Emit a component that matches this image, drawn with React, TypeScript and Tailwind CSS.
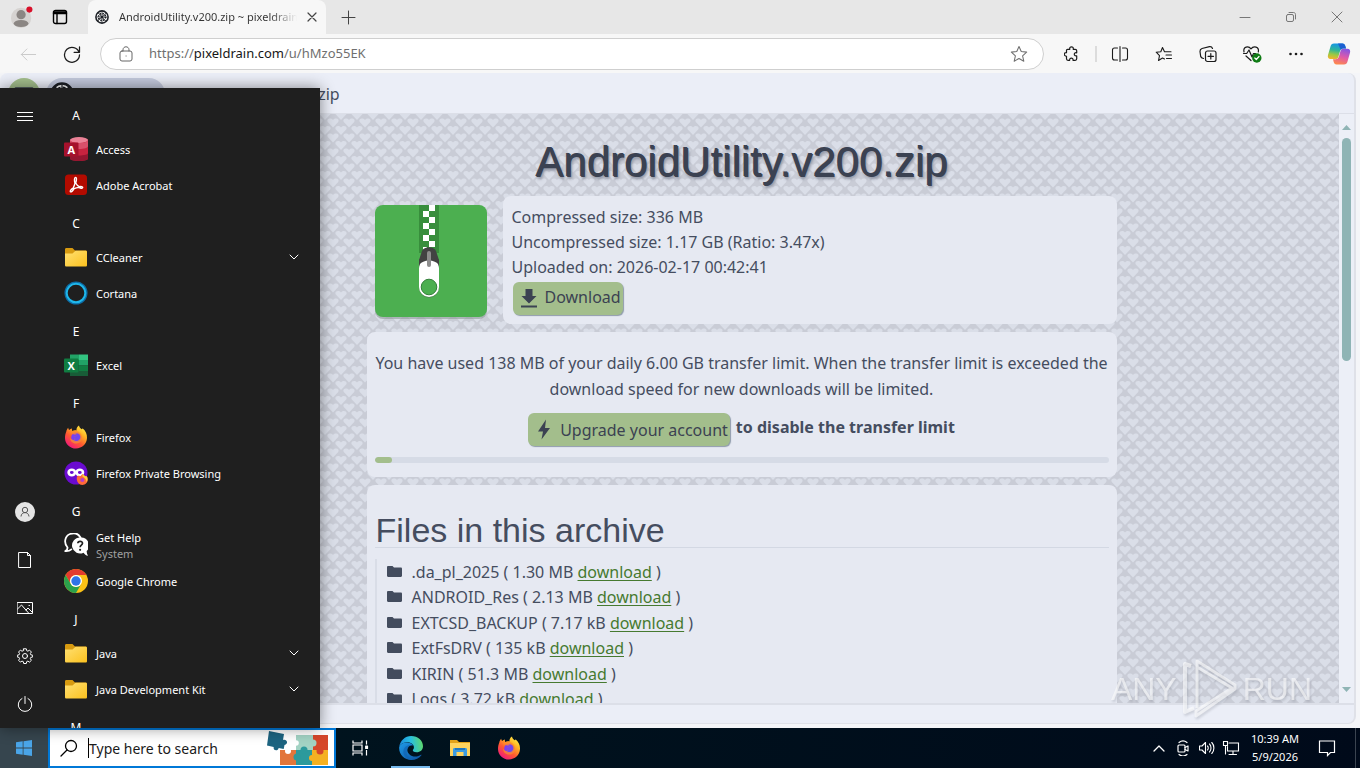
import { useId } from 'react';
import type { ReactNode } from 'react';

type IconProps = { className?: string };

function Line({ size = 20, w = 1, box = 24, className = '', children }: { size?: number; w?: number; box?: number; className?: string; children: ReactNode }) {
  return (
    <svg width={size} height={size} viewBox={`0 0 ${box} ${box}`} fill="none" stroke="currentColor" strokeWidth={w} strokeLinecap="round" strokeLinejoin="round" className={className} aria-hidden="true">
      {children}
    </svg>
  );
}

/* ---------- logos ---------- */

function WheelLogo({ size }: { size: number }) {
  return (
    <svg width={size} height={size} viewBox="0 0 24 24" aria-hidden="true">
      <circle cx="12" cy="12" r="10.5" fill="#fff" stroke="#1b1e24" strokeWidth="2.6" />
      <circle cx="12" cy="12" r="6" fill="none" stroke="#1b1e24" strokeWidth="3" strokeDasharray="2.6 2.1" />
      <circle cx="12" cy="12" r="2.6" fill="#1b1e24" />
      <path d="M12 2v20M2 12h20M5 5l14 14M19 5 5 19" stroke="#1b1e24" strokeWidth="1.2" />
    </svg>
  );
}

function AccessLogo() {
  return (
    <svg width="24" height="24" viewBox="0 0 24 24" aria-hidden="true">
      <path d="M6 2.5v19C6 23 10 24 15 24s9-1 9-2.5v-19Z" fill="#c8233f" />
      <path d="M6 16v5.5C6 23 10 24 15 24s9-1 9-2.5V16c0 1.500-4 2.500-9 2.500S6 17.500 6 16Z" fill="#951630" />
      <ellipse cx="15" cy="3" rx="9" ry="3" fill="#ea8296" />
      <path d="M6 3c0 2 4 3 9 3s9-1 9-3v6c0 2-4 3-9 3s-9-1-9-3Z" fill="#d9506a" />
      <rect y="5.500" width="14.500" height="14" rx="1" fill="#a5122c" />
      <text x="7.200" y="16.500" textAnchor="middle" fontSize="11" fontWeight="700" fill="#fff" fontFamily="Open Sans, sans-serif">A</text>
    </svg>
  );
}

function ExcelLogo() {
  return (
    <svg width="24" height="24" viewBox="0 0 24 24" aria-hidden="true">
      <path d="M6 1.500h9V7H6Z" fill="#21a366" />
      <path d="M15 1.500h9V7h-9Z" fill="#33c481" />
      <path d="M6 7h9v5.500H6Z" fill="#107c41" />
      <path d="M15 7h9v5.500h-9Z" fill="#21a366" />
      <path d="M6 12.500h9V18H6Z" fill="#185c37" />
      <path d="M15 12.500h9V18h-9Z" fill="#107c41" />
      <path d="M6 18h18v5H6Z" fill="#185c37" />
      <rect y="5.500" width="14.500" height="14" rx="1" fill="#107c41" />
      <text x="7.200" y="16.500" textAnchor="middle" fontSize="11" fontWeight="700" fill="#fff" fontFamily="Open Sans, sans-serif">X</text>
    </svg>
  );
}

function AcrobatLogo() {
  return (
    <svg width="24" height="24" viewBox="0 0 24 24" aria-hidden="true">
      <rect x="1" y="1.500" width="22" height="20.500" rx="3.500" fill="#b30b00" />
      <path d="M11.500 5.200c1.500 0 .9 3.600.2 5.600 1.100 2.100 2.300 3 3.500 3.600 2.100-.3 3.700.1 3.500 1.100-.2.900-2 .7-3.800-.3-1.700.2-3.300.6-4.800 1.200-1.500 2.500-3 3.800-3.700 3.100-.7-.8.6-2.200 2.700-3.500.8-1.600 1.500-3.300 1.900-5-.7-2.200-.9-5.800.5-5.800Z" fill="none" stroke="#fff" strokeWidth="1.400" transform="translate(0 -.8)" />
    </svg>
  );
}

function FolderLogo() {
  const id = useId();
  return (
    <svg width="24" height="24" viewBox="0 0 24 24" aria-hidden="true">
      <linearGradient id={id} x1="0" y1="0" x2="1" y2="1">
        <stop offset="0" stopColor="#ffe073" />
        <stop offset="1" stopColor="#fbc11e" />
      </linearGradient>
      <path d="M1 4.500C1 3.500 1.500 3 2.500 3h6l2.500 2.500h10.500c1 0 1.500.5 1.500 1.500v6H1Z" fill="#d79a10" />
      <path d="M1 8.500h7.500L11.500 5.700h10c1 0 1.500.5 1.500 1.500V20c0 1-.5 1.500-1.500 1.500h-19C1.500 21.500 1 21 1 20Z" fill={`url(#${id})`} />
    </svg>
  );
}

function CortanaLogo() {
  return (
    <svg width="24" height="24" viewBox="0 0 24 24" aria-hidden="true">
      <circle cx="12" cy="12" r="10.300" fill="none" stroke="#0d6ea8" strokeWidth="2.500" />
      <circle cx="12" cy="12" r="9.300" fill="none" stroke="#1fb7ea" strokeWidth="2" />
    </svg>
  );
}

function FirefoxLogo({ size = 24 }: { size?: number }) {
  const id = useId();
  return (
    <svg width={size} height={size} viewBox="0 0 24 24" aria-hidden="true">
      <linearGradient id={id} x1=".85" y1=".05" x2=".2" y2=".95">
        <stop offset="0" stopColor="#fff04a" />
        <stop offset=".3" stopColor="#ffb224" />
        <stop offset=".62" stopColor="#ff5a30" />
        <stop offset="1" stopColor="#f0187c" />
      </linearGradient>
      <path d="M2.300 6.500C2.600 5 3.300 3.700 4.200 2.800c.1 1 .4 1.700.9 2.300C6 4.200 7 3.700 8 3.500c-.2 1-.1 1.700.3 2.400 1.600-.6 3-.8 4.200-.4C12.300 3.500 13 1.600 15 .5c.3 1.800 1.400 2.800 2.700 3.800.6-.1.800-.5.800-1 3.200 2.600 4.700 6 4.500 9.800-.3 6-5 10.400-11 10.400S1 18.900 1 12.900c0-2.400.5-4.500 1.300-6.400Z" fill={`url(#${id})`} />
      <circle cx="12.200" cy="12.600" r="5" fill="#7a3ff2" />
      <path d="M12.500 5.800c-3-.7-5.500.4-6.600 2.600 1.600-.4 3 .1 3.800 1 1.200 0 2.800.1 2.900.8-.1 1-2.300 1.200-2.600 1.900-.4.900 0 1.800 1.500 2.500-2.300 1-4.700 0-5.500-2 .1 4 3 6.200 6.300 6 4-.2 6.200-3.500 5.600-6.800-.4-3.200-2.500-4.500-5.400-6Z" fill="#ff8a2b" opacity=".8" />
      <path d="M10 12.100c.3-.7 2.500-.9 2.600-1.900-.1-.5-.8-.7-1.600-.8 1.300-1.300 3.500-1 4.700.7 1.300 2.300.3 5.200-2.400 5.900-1.500.3-3-.3-3.700-1.200.7.200 1.300.1 1.900-.2-1.500-.7-1.900-1.600-1.500-2.500Z" fill="#7346ee" />
    </svg>
  );
}

function PrivateLogo() {
  return (
    <svg width="24" height="24" viewBox="0 0 24 24" aria-hidden="true">
      <circle cx="12" cy="12" r="11.500" fill="#6a0bd0" />
      <ellipse cx="7.800" cy="11.500" rx="3.200" ry="2.700" fill="none" stroke="#fff" strokeWidth="2.600" />
      <ellipse cx="15.800" cy="11.500" rx="3.200" ry="2.700" fill="none" stroke="#fff" strokeWidth="2.600" />
      <path d="M13 15.500l2-1 1 1 2.500-2.500 2.500 2 2 .5c2 4.500-.5 8.500-4.700 8.500-4 0-6.300-4-5.300-8.500Z" fill="#ff6a3a" />
      <path d="M18.500 13l2.500 2 2 .5c.8 2 .8 4-.3 5.500-.5-3-2-4-4.200-5.500Z" fill="#ffcf3a" />
      <circle cx="18.300" cy="19" r="2" fill="#b43fc8" />
    </svg>
  );
}

function HelpLogo() {
  return (
    <svg width="24" height="24" viewBox="0 0 24 24" aria-hidden="true">
      <path d="M3.500 14.500C-.5 10 .8 3 6 1c4.500-1.700 8.500 0 10.500 3.500M3.500 14.500c.1 1.500-.7 3-2.200 3.600 2.500.2 4.700-.5 6-1.700" fill="none" stroke="#fff" strokeWidth="1.800" strokeLinecap="round" strokeLinejoin="round" />
      <path d="M16 4.500a8 8 0 1 0 3.500 15.200c1 1.600 2.500 2.700 4.500 3-.9-1.500-1.400-3-1.300-4.600A8 8 0 0 0 16 4.500Z" fill="#fff" />
      <path d="M13.800 10.300c.2-2.600 4.800-2.600 4.700 0-.1 1.900-2.400 1.800-2.400 4" fill="none" stroke="#1f1f1f" strokeWidth="1.700" />
      <circle cx="16.100" cy="16.800" r="1.100" fill="#1f1f1f" />
    </svg>
  );
}

function ChromeLogo() {
  return (
    <svg width="24" height="24" viewBox="0 0 24 24" aria-hidden="true">
      <circle cx="12" cy="12" r="12" fill="#fbc116" />
      <path d="M1.608 6A12 12 0 0 1 22.392 6H12a6 6 0 0 0-5.196 9Z" fill="#e33b2e" />
      <path d="M1.608 6A12 12 0 0 0 12 24l5.196-9a6 6 0 0 1-10.392 0Z" fill="#2ba24c" />
      <circle cx="12" cy="12" r="6" fill="#fff" />
      <circle cx="12" cy="12" r="4.700" fill="#2f74e8" />
    </svg>
  );
}

function EdgeLogo() {
  return (
    <svg width="24" height="24" viewBox="0 0 24 24" aria-hidden="true">
      <defs>
        <linearGradient id="edge-top" x1="0" y1=".5" x2="1" y2=".4">
          <stop offset="0" stopColor="#1b8be0" />
          <stop offset=".5" stopColor="#28bfe0" />
          <stop offset="1" stopColor="#5fd96a" />
        </linearGradient>
        <linearGradient id="edge-low" x1="0" y1="0" x2="1" y2="1">
          <stop offset="0" stopColor="#1f9be8" />
          <stop offset="1" stopColor="#0b4f9e" />
        </linearGradient>
      </defs>
      <path d="M.2 11C1 4.800 6 0 12.200 0 19 0 24 4.700 24 10.300c0 3.700-2.800 6-6.400 6-2.900 0-4.200-1-3.700-2.200.6-.9 1.100-1.500 1-3C14.700 8 11 6 7.500 6.300 4 6.600 1.200 8.300.2 11Z" fill="url(#edge-top)" />
      <path d="M.2 11C1.300 7.800 4.500 6.200 8 6.400c3.300.2 5.500 1.600 6.400 3.200-2-.8-4.500.1-5.600 2.300-1.900 4.300 2.300 8.800 7.500 8.700 2.400 0 4-.7 5.600-1.800.5-.2.700.1.500.5C20.300 22.300 16.500 24 12.500 24 5 24-.5 18 .2 11Z" fill="url(#edge-low)" />
      <path d="M8.800 11.900c-3 5.400.5 10.800 6.200 11.800-8 1-12.500-6-10-11 1.500-3 5.500-4.500 9.400-3.100-2-.8-4.500.1-5.600 2.300Z" fill="#0f62b4" opacity=".65" />
    </svg>
  );
}

function ExplorerLogo() {
  return (
    <svg width="22" height="22" viewBox="0 0 22 22" aria-hidden="true">
      <path d="M1 3h7l2 2h11v5H1Z" fill="#e3a21a" />
      <path d="M1 6h20v13H1Z" fill="#ffd35e" />
      <path d="M4 19v-6.500c0-1 .6-1.500 1.500-1.500h11c.9 0 1.500.5 1.500 1.500V19h-3.500v-4h-7v4Z" fill="#3c9be0" />
      <path d="M6 11h10v2H6Z" fill="#1f75bd" />
    </svg>
  );
}

function CopilotLogo() {
  return (
    <svg width="24" height="24" viewBox="0 0 24 24" aria-hidden="true">
      <defs>
        <linearGradient id="cop-l" x1=".4" y1="0" x2=".2" y2="1">
          <stop offset="0" stopColor="#1595e6" />
          <stop offset=".4" stopColor="#2db59a" />
          <stop offset=".7" stopColor="#9bc943" />
          <stop offset="1" stopColor="#f7b32b" />
        </linearGradient>
        <linearGradient id="cop-r" x1=".6" y1="0" x2=".3" y2="1">
          <stop offset="0" stopColor="#8a55e0" />
          <stop offset=".5" stopColor="#e05aa8" />
          <stop offset="1" stopColor="#ff8a4a" />
        </linearGradient>
      </defs>
      <path d="M7 1.500h8.500c1.600 0 2.300 1 2.800 2.500L19 6.500h-2.500c-2 0-3 1-3.600 3l-1.500 5.200c-.5 1.600-1.300 2.300-3 2.300H3.500C1.200 17 .4 15.200 1 13L3.500 4.500C4 2.700 5 1.500 7 1.500Z" fill="url(#cop-l)" />
      <path d="M11 1.500h4.500c1.600 0 2.300 1 2.800 2.500L19 6.500h-2.500c-1.300 0-2.200.4-2.800 1.300Z" fill="#1c5fd0" />
      <path d="M17 22.500H9.500c-1.700 0-2.300-1-2.800-2.500L6 17.200h2.400c2 0 3-1 3.600-3L13.500 9c.5-1.600 1.300-2.300 3-2.300h4c2.300 0 3.100 1.800 2.500 4l-2.500 8.800c-.5 1.800-1.500 3-3.500 3Z" fill="url(#cop-r)" />
    </svg>
  );
}

function ZipArt() {
  return (
    <svg width="112" height="114" viewBox="0 0 112 114" className="mt-[9px]" aria-hidden="true">
      <rect y="2" width="112" height="112" rx="8" fill="#8f9a9a" opacity=".6" />
      <rect width="112" height="112" rx="8" fill="#4caf50" />
      <rect x="44" width="20" height="48" fill="#388e3c" />
      {[0, 1, 2, 3, 4, 5, 6].map((i) => (
        <rect key={i} x={i % 2 ? 48 : 54} y={i * 6} width="6" height="6" fill="#fff" />
      ))}
      <rect x="48" y="42" width="4" height="3" fill="#fff" />
      <path d="M47 46c2-5 12-5 14 0l3 9v6H44v-6Z" fill="#424242" />
      <rect x="44" y="55" width="20" height="38" rx="10" fill="#5a6a5a" opacity=".5" />
      <rect x="44" y="53" width="20" height="39" rx="10" fill="#fff" />
      <path d="M44 60v-5c4-3 16-3 20 0v5c-4-6-16-6-20 0Z" fill="#424242" />
      <rect x="52" y="46" width="4" height="16" rx="2" fill="#8d8d8d" />
      <circle cx="54" cy="82" r="7.800" fill="#4caf50" stroke="#33803a" strokeWidth="1" />
    </svg>
  );
}

function PuzzleArt() {
  return (
    <svg width="64" height="35" viewBox="0 0 64 35" aria-hidden="true">
      <path d="M14 19h18v15H14Z" fill="#e2763b" />
      <path d="M30 4h17v16H30Z" fill="#a3d3c4" />
      <path d="M47 4h15v16H47Z" fill="#d5472b" />
      <path d="M30 19h17v15H30Z" fill="#2c9a9c" />
      <path d="M46 19h16v15H46Z" fill="#f5b122" />
      <circle cx="22" cy="20" r="3" fill="#fff" />
      <circle cx="31" cy="26" r="3.500" fill="#2c9a9c" />
      <circle cx="38" cy="19" r="3.500" fill="#2c9a9c" />
      <circle cx="47" cy="12" r="3.500" fill="#a3d3c4" />
      <circle cx="54" cy="20" r="3.500" fill="#d5472b" />
      <circle cx="46" cy="27" r="3" fill="#f5b122" />
      <circle cx="30" cy="12" r="2.800" fill="#fff" />
      <path d="m3 0 15 3-1 6c4-1.500 6 4 1.500 5l-.8 4-5-1c-.8 3.700-6 2.500-5-1L1 14.500Z" fill="#1d6480" />
    </svg>
  );
}

/* ---------- start menu ---------- */

type Entry = { letter?: string; name?: string; sub?: string; folder?: boolean; icon?: ReactNode };

const entries: Entry[] = [
  { letter: 'A' },
  { name: 'Access', icon: <AccessLogo /> },
  { name: 'Adobe Acrobat', icon: <AcrobatLogo /> },
  { letter: 'C' },
  { name: 'CCleaner', folder: true, icon: <FolderLogo /> },
  { name: 'Cortana', icon: <CortanaLogo /> },
  { letter: 'E' },
  { name: 'Excel', icon: <ExcelLogo /> },
  { letter: 'F' },
  { name: 'Firefox', icon: <FirefoxLogo /> },
  { name: 'Firefox Private Browsing', icon: <PrivateLogo /> },
  { letter: 'G' },
  { name: 'Get Help', sub: 'System', icon: <HelpLogo /> },
  { name: 'Google Chrome', icon: <ChromeLogo /> },
  { letter: 'J' },
  { name: 'Java', folder: true, icon: <FolderLogo /> },
  { name: 'Java Development Kit', folder: true, icon: <FolderLogo /> },
  { letter: 'M' },
];

function RailButton({ label, children }: { label: string; children: ReactNode }) {
  return (
    <button aria-label={label} className="flex h-12 w-full items-center justify-center">
      {children}
    </button>
  );
}

function StartMenu() {
  return (
    <nav aria-label="Start" className="absolute bottom-10 left-0 flex h-[640px] w-80 overflow-hidden bg-[#1f1f1f] text-[11px] text-white shadow-[0_0_14px_rgba(0,0,0,0.45)]">
      <div className="flex w-[50px] flex-col pt-1">
        <RailButton label="Expand">
          <Line box={16} size={16} className="text-white"><path d="M0 4.500h16M0 8.500h16M0 12.500h16" strokeLinecap="butt" /></Line>
        </RailButton>
        <div className="mt-auto">
          <RailButton label="Account">
            <svg width="20" height="20" viewBox="0 0 20 20" fill="none" stroke="#555" aria-hidden="true">
              <circle cx="10" cy="10" r="10" fill="#e4e4e4" stroke="none" />
              <circle cx="10" cy="8" r="2.700" />
              <path d="M6 14.500c.3-5.200 7.700-5.200 8 0" />
            </svg>
          </RailButton>
          <RailButton label="Documents">
            <Line box={16} size={16}><path d="M2 .5h8.500l3 3v12H2ZM10.500.500v3h3" /></Line>
          </RailButton>
          <RailButton label="Pictures">
            <Line box={16} size={16}><path d="M.5 2.500h15v11H.5ZM.5 9 4.500 5l7.500 8.500M9 10l2-2 4.500 4.500" strokeLinejoin="miter" /><path d="M12 5.500h.5" /></Line>
          </RailButton>
          <RailButton label="Settings">
            <Line box={16} size={16} w={1}>
              <path d="M6.700.8h2.600l.4 1.900 1.200.5 1.600-1.100 1.900 1.900-1.100 1.600.5 1.200 1.900.4v1.800l-1.900.4-.5 1.300 1.100 1.600-1.900 1.800-1.600-1-1.200.5-.4 1.900H6.700l-.4-1.900-1.300-.5-1.600 1-1.800-1.800 1-1.600-.5-1.300-1.800-.4V7.200l1.800-.4.500-1.200-1-1.600 1.800-1.900L5 3.200l1.300-.5Z" />
              <circle cx="8" cy="8" r="2.500" />
            </Line>
          </RailButton>
          <RailButton label="Power">
            <Line box={16} size={16}><path d="M5 2.500a6.800 6.800 0 1 0 6 0M8 .5v7" /></Line>
          </RailButton>
        </div>
      </div>
      <ul className="flex-1 pt-[7px] pl-[14px]">
        {entries.map((e) =>
          e.letter ? (
            <li key={e.letter} className="flex h-9 items-center">
              <span className="w-6 pt-1.5 text-center text-xs">{e.letter}</span>
            </li>
          ) : (
            <li key={e.name}>
              <button className="flex h-9 w-full items-center gap-2 pr-5 text-left">
                {e.icon}
                <span className="flex-1 pt-px leading-4">
                  {e.name}
                  {e.sub && <span className="block text-[#a0a0a0]">{e.sub}</span>}
                </span>
                {e.folder && <Line box={12} size={12}><path d="m2 4 4 4 4-4" /></Line>}
              </button>
            </li>
          ),
        )}
      </ul>
    </nav>
  );
}

/* ---------- browser ---------- */

function WindowButton({ label, children }: { label: string; children: ReactNode }) {
  return (
    <button aria-label={label} className="flex w-[46px] items-center justify-center text-[#777]">
      {children}
    </button>
  );
}

function ToolButton({ label, wide = 'w-11', children }: { label: string; wide?: string; children: ReactNode }) {
  return (
    <button aria-label={label} className={`flex h-8 shrink-0 items-center justify-center text-[#1b1b1b] ${wide}`}>
      {children}
    </button>
  );
}

function BrowserTop() {
  return (
    <header>
      <div className="flex h-[34px] bg-[#e7e7e7]">
        <div className="flex w-[88px] items-center pl-[10px]">
          <button aria-label="Profile" className="flex h-full w-6 items-center">
            <svg width="26" height="26" viewBox="0 0 26 26" aria-hidden="true">
              <circle cx="12" cy="14" r="11" fill="#d6d3d1" />
              <circle cx="12" cy="10.500" r="5" fill="#8b8683" />
              <ellipse cx="12" cy="20" rx="8" ry="3.800" fill="#8b8683" />
              <circle cx="21" cy="5" r="3.300" fill="#d8102a" />
            </svg>
          </button>
          <button aria-label="Tab actions" className="ml-[18px] flex h-full items-center">
            <Line box={16} size={16} w={1.4}><rect x="1.500" y="1.500" width="13" height="13" rx="2" /><path d="M1.500 3h13M1.500 4.500h13M5 5v9.500" /></Line>
          </button>
        </div>
        <div className="flex w-[238px] items-center rounded-t-lg bg-[#f7f7f7] pr-2 pl-[7px]">
          <WheelLogo size={14} />
          <span className="ml-[10px] w-[178px] overflow-hidden bg-linear-to-r from-[#333] from-85% to-transparent bg-clip-text text-[11px] whitespace-nowrap text-transparent">AndroidUtility.v200.zip ~ pixeldrain</span>
          <button aria-label="Close tab" className="ml-[9px] text-[#444]">
            <Line box={12} size={12} w={1.200}><path d="m2 2 8 8M10 2l-8 8" /></Line>
          </button>
        </div>
        <button aria-label="New tab" className="ml-[14px] text-[#444]">
          <Line box={16} size={16}><path d="M8.500 2v13M2 8.500h13" /></Line>
        </button>
        <div className="ml-auto flex">
          <WindowButton label="Minimize"><Line box={12} size={12}><path d="M1 6.500h10" /></Line></WindowButton>
          <WindowButton label="Restore"><Line box={12} size={12}><rect x="1.500" y="3.500" width="7" height="7" rx="1.500" /><path d="M4 1.500h4.500c1.200 0 2 .8 2 2V8" /></Line></WindowButton>
          <WindowButton label="Close"><Line box={12} size={12}><path d="m1 1 10 10M11 1 1 11" /></Line></WindowButton>
        </div>
      </div>
      <div className="flex h-[39px] items-center bg-[#f7f7f7] pt-px pl-[6px]">
        <ToolButton label="Back"><Line size={19} className="text-[#c8c8c8]" w={1.200}><path d="M21 12H3M10 5l-7 7 7 7" /></Line></ToolButton>
        <ToolButton label="Reload"><Line size={20} w={1.500}><path d="M20.500 10A9 9 0 1 0 21 13M21 3.500V10h-6.500" /></Line></ToolButton>
        <div className="mx-[6px] flex h-8 flex-1 items-center rounded-full border border-[#cfcfcf] bg-white pr-[15px] pl-[17px]">
          <Line box={16} size={16} className="text-[#666]"><rect x="2" y="5" width="12" height="10" rx="2" /><path d="M5 5V3.800c0-4 6-4 6 0V5M8 10h.2" /></Line>
          <label className="relative ml-[15px] block h-full flex-1 text-[13px]">
            <span aria-hidden="true" className="pointer-events-none absolute inset-0 flex items-center text-[#6f6f6f]">
              <span>https://</span><span className="text-[#161616]">pixeldrain.com</span><span>/u/hMzo55EK</span>
            </span>
            <input aria-label="Address" className="h-full w-full text-transparent outline-none" defaultValue="" />
          </label>
          <button aria-label="Add to favorites">
            <Line size={18} className="text-[#707070]" w={1.400}><path d="m12 2 3 6.700 7.200.8-5.400 4.900 1.600 7.200-6.400-3.700-6.400 3.700 1.600-7.200L1.800 9.500 9 8.700Z" /></Line>
          </button>
        </div>
        <ToolButton label="Extensions"><Line box={16} size={16} w={1.200}><path d="M3.500 3.300h2.300c-.9-3.300 4.300-3.300 3.400 0h2c1 0 1.500.5 1.500 1.500v2c-3.200-.9-3.200 3.800 0 3v3c0 1-.5 1.500-1.500 1.500H9c.5-3-3.800-3-3.300 0H4c-1 0-1.500-.5-1.500-1.500v-2.500c-3-.5-3-4 0-3.600V4.300c0-.6.400-1 1-1Z" /></Line></ToolButton>
        <span className="mx-px h-4 w-0.5 bg-[#dcdcdc]" />
        <ToolButton label="Split screen"><Line box={18} size={18} w={1.100}><path d="M6.500 3H3.500C2.300 3 1.500 3.800 1.500 5v8c0 1.200.8 2 2 2h3M11.500 3h3c1.200 0 2 .8 2 2v8c0 1.200-.8 2-2 2h-3M9 1.500v15" /></Line></ToolButton>
        <ToolButton label="Favorites"><Line box={18} size={18} w={1.100}><path d="M9.500 14 7.500 13 3.500 15.500l1-4.800L1.200 7.200l4.600-.5L7.500 2.500l2 4.200H16M11 10h5.500M11.500 13.500h5" /></Line></ToolButton>
        <ToolButton label="Collections"><Line box={18} size={18} w={1.200}><rect x="6.500" y="6" width="10.500" height="10.500" rx="2" /><path d="M11.800 8.500v5.500M9 11.300h5.500M4.500 13.500C2.500 13 2 12.500 1.700 11.500L1 6.500C.9 4.800 1.500 4 3 3.500l7.500-1.800c1.500-.2 2.500.3 3 1.800" /></Line></ToolButton>
        <ToolButton label="Browser essentials">
          <svg width="20" height="20" viewBox="0 0 20 20" fill="none" stroke="currentColor" strokeWidth="1.200" strokeLinecap="round" strokeLinejoin="round" aria-hidden="true">
            <path d="M2 8C.8 2.500 6.500 1.500 9 4.800 11.500 1.500 17.500 2.500 16.300 8M4 12l5 4.500M1.500 9.500h3.200L7 6l3 7 1.500-3.500h2" />
            <circle cx="14.800" cy="14" r="4.700" fill="#0f7b14" stroke="none" />
            <path d="m12.800 14 1.500 1.500 2.700-3" stroke="#fff" />
          </svg>
        </ToolButton>
        <ToolButton label="More"><svg width="16" height="16" viewBox="0 0 16 16" fill="currentColor" aria-hidden="true"><circle cx="2.500" cy="8" r="1.300" /><circle cx="8" cy="8" r="1.300" /><circle cx="13.500" cy="8" r="1.300" /></svg></ToolButton>
        <ToolButton label="Copilot" wide="w-[42px]"><CopilotLogo /></ToolButton>
      </div>
    </header>
  );
}

function HeartField() {
  return (
    <svg className="absolute inset-0 h-full w-full" aria-hidden="true">
      <defs>
        <pattern id="hearts" width="16" height="15" patternUnits="userSpaceOnUse" patternTransform="translate(5 2)">
          <rect width="16" height="15" fill="#c9ccd6" />
          <g fill="#dadee8">
            <path d="M8 11.500 2.800 6C1 3 5.500.8 8 4c2.500-3.200 7-1 5.200 2Z" />
            <path d="M0 4-5.200-1.500C-7-4.500-2.500-6.700 0-3.500 2.500-6.700 7-4.500 5.200-1.500Z" />
            <path d="m16 4-5.200-5.500C9-4.500 13.500-6.700 16-3.500c2.500-3.200 7-1 5.200 2Z" />
            <path d="m0 19-5.200-5.500C-7 10.500-2.500 8.300 0 11.500c2.500-3.200 7-1 5.200 2Z" />
            <path d="m16 19-5.200-5.500c-1.800-3 2.700-5.200 5.200-2 2.500-3.200 7-1 5.200 2Z" />
          </g>
        </pattern>
      </defs>
      <rect width="100%" height="100%" fill="url(#hearts)" />
    </svg>
  );
}

const files = [
  ['.da_pl_2025', '1.30 MB'],
  ['ANDROID_Res', '2.13 MB'],
  ['EXTCSD_BACKUP', '7.17 kB'],
  ['ExtFsDRV', '135 kB'],
  ['KIRIN', '51.3 MB'],
  ['Logs', '3.72 kB'],
];

function Watermark({ className = '' }: IconProps) {
  return (
    <div className={`pointer-events-none flex items-center gap-1 font-['Liberation_Sans',sans-serif] text-[32px] leading-8 text-white/60 drop-shadow-[1px_2px_1px_rgba(90,95,110,0.35)] ${className}`}>
      <span>ANY</span>
      <svg width="58" height="62" viewBox="0 0 58 62" fill="none" stroke="currentColor" strokeLinejoin="round" aria-hidden="true">
        <path d="M10 8 4 6v48l9-4" strokeWidth="4" />
        <path d="M16 50V3l38 24v4L15 58v-5l36-23L16 9" strokeWidth="3" />
      </svg>
      <span>RUN</span>
    </div>
  );
}

function Page() {
  return (
    <div className="mr-1 mb-1 flex min-h-0 flex-1 flex-col overflow-hidden rounded-lg border-r-2 border-b border-[#dfe1e8] bg-[#ebeef7] text-base text-[#454d5f]">
      <div className="flex h-[41px] items-center gap-1.5 border-b border-[#dcdfe8] pt-px pl-2">
        <button aria-label="Menu" className="flex size-8 shrink-0 items-center justify-center rounded-full bg-[#a3be8c] text-[#3b4252]">
          <Line size={22} w={2.500}><path d="M3 6h18M3 12h18M3 18h18" /></Line>
        </button>
        <a href="#home" className="flex h-8 w-[119px] shrink-0 items-center gap-2 rounded-full bg-[#c3c9dc] pl-1"><WheelLogo size={24} />Pixeldrain</a>
        <span className="flex-1">AndroidUtility.v200.zip</span>
      </div>
      <div className="flex min-h-0 flex-1">
        <main className="relative min-w-0 flex-1 overflow-hidden pl-36">
          <HeartField />
          <div className="relative mx-auto flex max-w-[750px] flex-col gap-2">
            <h1 className="-mb-2 pt-[23px] pb-[9px] text-center font-['Liberation_Sans',sans-serif] text-[42px] leading-[50px] whitespace-nowrap text-[#3b4252] [text-shadow:1px_1px_0_#3b4252,2px_3px_3px_#8b91a0]">AndroidUtility.v200.zip</h1>
            <div className="flex items-start gap-4 pl-2">
              <ZipArt />
              <section className="flex-1 rounded-lg bg-[#e6e9f2] px-[9px] py-[9px] leading-[25px]">
                <p>Compressed size: 336 MB</p>
                <p>Uncompressed size: 1.17 GB (Ratio: 3.47x)</p>
                <p>Uploaded on: 2026-02-17 00:42:41</p>
                <button className="mt-0.5 ml-px flex h-[33px] items-center gap-1 rounded-md bg-[#a3be8c] pr-0.5 pb-0.5 pl-1 text-[#3b4252] shadow-[1px_1px_1px_#8f9bab]">
                  <svg width="24" height="24" viewBox="0 0 24 24" fill="currentColor" aria-hidden="true"><path d="M19.500 10h-4V3h-7v7h-4l7.500 7.500ZM4 19.500v2h16v-2Z" /></svg>
                  Download
                </button>
              </section>
            </div>
            <section className="rounded-lg bg-[#e6e9f2] px-2 pt-[18px] pb-[14px] text-center leading-[26px]">
              <p>You have used 138 MB of your daily 6.00 GB transfer limit. When the transfer limit is exceeded the download speed for new downloads will be limited.</p>
              <div className="mt-[11px] flex items-start justify-center gap-1.5">
                <button className="flex h-[33px] items-center gap-1 rounded-md bg-[#a3be8c] pr-0.5 pl-1 text-[#3b4252] shadow-[1px_1px_1px_#8f9bab]">
                  <svg width="24" height="24" viewBox="0 0 24 24" fill="currentColor" aria-hidden="true"><path d="m14 1.500-8 12h5L9.500 21.500 18 10h-5Z" /></svg>
                  Upgrade your account
                </button>
                <strong className="pt-px">to disable the transfer limit</strong>
              </div>
              <div role="progressbar" aria-label="Transfer used" aria-valuenow={2} className="mt-[11px] h-1.5 overflow-hidden rounded-full bg-[#d6dbe6]">
                <div className="h-full w-[17px] rounded-full bg-[#a3be8c]" />
              </div>
            </section>
            <section className="rounded-t-lg bg-[#e6e9f2] px-2 pt-7 pb-10">
              <h2 className="border-b border-[#d3d8e3] pl-px font-['Liberation_Sans',sans-serif] text-[34px] leading-[34px]">Files in this archive</h2>
              <ul className="mt-[11px] grid h-[153px] grid-rows-6 border-l-2 border-[#d9dde7] pl-[10px]">
                {files.map(([name, size]) => (
                  <li key={name} className="flex items-center gap-[9px]">
                    <svg width="16" height="16" viewBox="0 0 16 16" fill="#434c5e" aria-hidden="true"><path d="M0 3.200c0-.7.500-1.200 1.200-1.200h4.300L7 3.500h6.800c.7 0 1.200.5 1.200 1.200v7.100c0 .7-.5 1.200-1.200 1.200H1.200C.5 13 0 12.500 0 11.800Z" /></svg>
                    <span>{name} ( {size} <a href={`#${name}`} className="text-[#467a30] underline underline-offset-2">download</a> )</span>
                  </li>
                ))}
              </ul>
            </section>
          </div>
        </main>
        <div aria-hidden="true" className="flex w-[15px] flex-col items-center bg-[#eceff7] py-[11px] text-[#8fb4b5]">
          <svg width="9" height="5" viewBox="0 0 9 5" fill="currentColor"><path d="M4.500 0 9 5H0Z" /></svg>
          <span className="mt-2 h-[223px] w-[9px] rounded-full bg-current" />
          <svg width="9" height="5" viewBox="0 0 9 5" fill="currentColor" className="mt-auto"><path d="M0 0h9L4.500 5Z" /></svg>
        </div>
      </div>
      <div className="h-5 border-t-2 border-[#dcdfe8]" />
    </div>
  );
}

/* ---------- taskbar ---------- */

function Taskbar() {
  return (
    <footer className="flex h-10 shrink-0 bg-linear-to-r from-[#00161f] to-[#000a1a] text-white">
      <button aria-label="Start" className="flex w-12 items-center justify-center bg-[#36454e]">
        <svg width="16" height="16" viewBox="0 0 16 16" fill="#4aa5e8" aria-hidden="true"><path d="M0 2.300 6.700 1.300V7.600H0ZM7.500 1.200 16 0v7.600H7.500ZM0 8.400h6.700v6.300L0 13.700ZM7.500 8.400H16V16l-8.500-1.200Z" /></svg>
      </button>
      <label className="flex w-72 items-center border-2 border-[#0078d7] bg-white pl-[10px] text-black">
        <Line box={18} size={18} w={1.300}><circle cx="11" cy="7" r="5.500" /><path d="m7 11-6 6" /></Line>
        <span className="ml-[10px] h-5 w-px bg-black" />
        <input aria-label="Search" placeholder="Type here to search" className="w-0 flex-1 pt-px text-sm outline-none placeholder:text-[#1a1a1a]" />
        <span className="mr-1"><PuzzleArt /></span>
      </label>
      <button aria-label="Task view" className="flex w-12 items-center justify-center">
        <Line box={18} size={18} w={1.200}><path d="M2 1.500V4h9V1.500M2 16.500V14h9v2.500M2 6h9v6H2ZM15.500 1.500v4M15.500 11v5.500" strokeLinecap="butt" strokeLinejoin="miter" /><path d="M14.700 7h1.800v2.500h-1.800Z" fill="currentColor" /></Line>
      </button>
      <button aria-label="Edge" className="relative ml-0.5 flex w-[49px] items-center justify-center">
        <EdgeLogo />
        <span className="absolute inset-x-[5px] bottom-0 h-0.5 bg-[#76b9ed]" />
      </button>
      <button aria-label="File Explorer" className="flex w-[49px] items-center justify-center"><ExplorerLogo /></button>
      <button aria-label="Firefox" className="flex w-[49px] items-center justify-center"><FirefoxLogo /></button>
      <div className="ml-auto flex items-center">
        <button aria-label="Hidden icons" className="flex w-6 justify-center"><Line box={14} size={14} w={1.300}><path d="m2 10 5-5 5 5" /></Line></button>
        <button aria-label="Meet now" className="flex w-6 justify-center"><Line box={16} size={16} w={1.200}><rect x="3" y="5" width="7" height="7" rx="1" /><path d="m10 7.500 3-1.500v5l-3-1.500M4 2.500C6.500.500 9.500.500 12 2.500M4 14.500c2.500 2 5.500 2 8 0" /></Line></button>
        <button aria-label="Volume" className="flex w-6 justify-center"><Line box={16} size={16} w={1.100}><path d="M.5 6h2.500l3.500-3.500v11L3 10H.5ZM8.500 6c1 1 1 3 0 4M10.500 4c2 2 2 6 0 8M12.800 2.500c2.800 3 2.800 8 0 11" /></Line></button>
        <button aria-label="Network" className="flex w-6 justify-center"><Line box={18} size={18} w={1.100}><path d="M7 4h9.500v8H5.500V7.500M11 12v3M7 15.500h7.500M1.500 2.500h4v4h-4ZM3.500 6.500V15" strokeLinejoin="miter" /></Line></button>
        <time className="w-16 text-center text-[11px] leading-[18px]">10:39 AM<br />5/9/2026</time>
        <button aria-label="Notifications" className="flex w-10 justify-center"><Line box={18} size={18} w={1.200}><path d="M1.500 2h15v11.500h-4L9.500 16.500V13.500h-8Z" strokeLinejoin="miter" /></Line></button>
        <button aria-label="Show desktop" className="ml-2 h-10 w-[5px] border-l border-[#3b4450]" />
      </div>
    </footer>
  );
}

export default function App() {
  return (
    <div className="relative flex h-screen flex-col overflow-hidden bg-[#f4f5f8] font-['Noto_Sans','Open_Sans',sans-serif]">
      <BrowserTop />
      <Page />
      <Taskbar />
      <StartMenu />
      <Watermark className="absolute right-12 bottom-12" />
    </div>
  );
}
